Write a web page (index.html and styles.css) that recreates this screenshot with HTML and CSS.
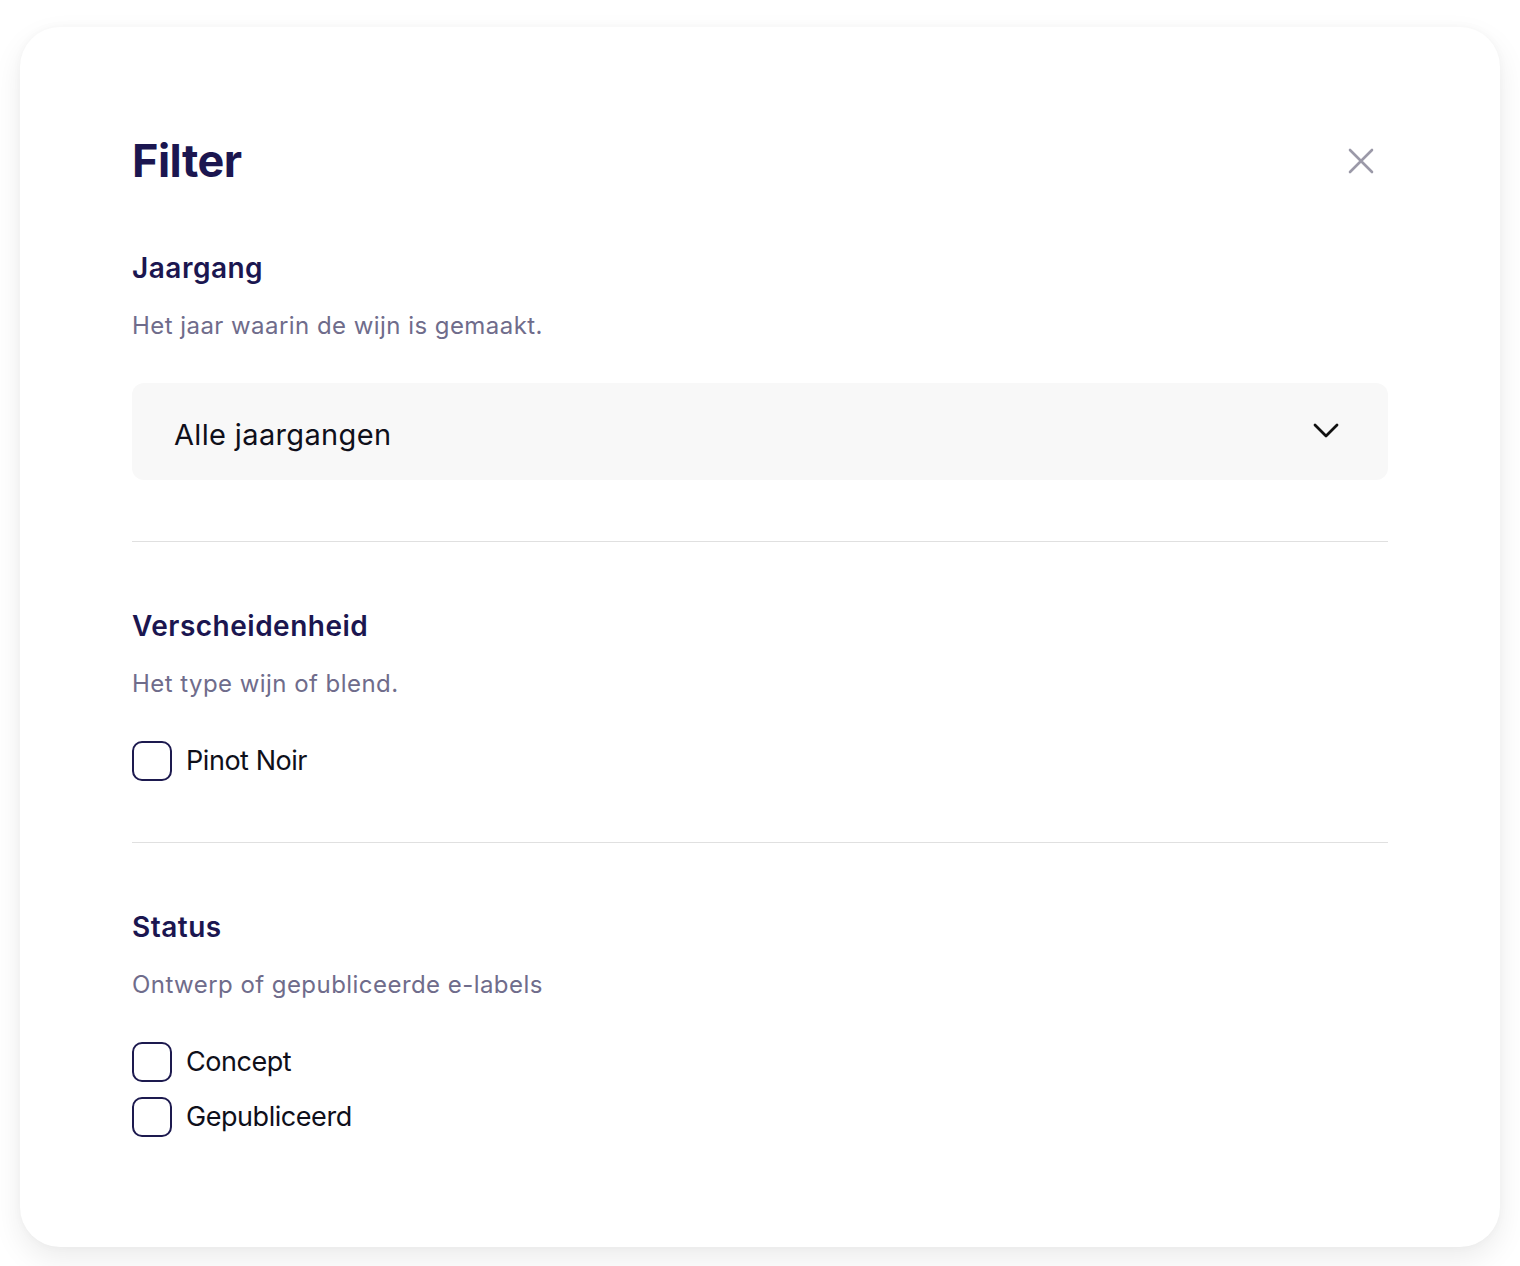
FILE: index.html
```html
<!DOCTYPE html>
<html lang="nl">
<head>
  <meta charset="UTF-8" />
  <meta name="viewport" content="width=device-width, initial-scale=1.0" />
  <title>Filter</title>
  <link rel="stylesheet" href="styles.css">
</head>
<body>
  <div class="card">
    <div class="card-header">
      <h1>Filter</h1>
      <button class="close-btn" aria-label="Sluiten">
        <svg width="28" height="28" viewBox="0 0 28 28" fill="none">
          <path d="M3 3L25 25M25 3L3 25" stroke="#9b99a8" stroke-width="2.6" stroke-linecap="round" />
        </svg>
      </button>
    </div>

    <div class="section">
      <h2>Jaargang</h2>
      <p class="hint">Het jaar waarin de wijn is gemaakt.</p>
      <div class="select">
        <span>Alle jaargangen</span>
        <svg width="26" height="16" viewBox="0 0 26 16" fill="none">
          <path d="M2 2L13 13L24 2" stroke="#111" stroke-width="2.8" stroke-linecap="round" stroke-linejoin="round" />
        </svg>
      </div>
    </div>

    <div class="section">
      <h2>Verscheidenheid</h2>
      <p class="hint">Het type wijn of blend.</p>
      <div class="checkbox-list">
        <label class="check"><span class="box"></span> Pinot Noir</label>
      </div>
    </div>

    <div class="section last">
      <h2>Status</h2>
      <p class="hint">Ontwerp of gepubliceerde e-labels</p>
      <div class="checkbox-list">
        <label class="check"><span class="box"></span> Concept</label>
        <label class="check"><span class="box"></span> Gepubliceerd</label>
      </div>
    </div>
  </div>
</body>
</html>
```

FILE: styles.css
```css
body {
  margin: 0;
  padding: 27px 20px 19px;
  background: #fff;
  font-family: Inter, "Noto Sans", sans-serif;
}
.card {
  background: #fff;
  border-radius: 40px;
  box-shadow: 0 12px 30px rgba(0,0,0,0.08), 0 0 10px rgba(0,0,0,0.03);
  padding: 107px 112px 110px;
}
.card-header {
  display: flex;
  align-items: center;
  justify-content: space-between;
}
h1 {
  margin: 0;
  font-size: 45px;
  line-height: 54px;
  font-weight: 700;
  color: #1b1650;
  letter-spacing: -0.5px;
}
.close-btn {
  background: none;
  border: none;
  padding: 0;
  margin-right: 13px;
  width: 28px;
  height: 28px;
  cursor: pointer;
}
.section {
  padding: 62px 0 61px;
  border-bottom: 1px solid #e0e0e0;
}
.section + .section {
  padding-top: 66px;
}
.section.last {
  border-bottom: none;
  padding-bottom: 0;
}
h2 {
  margin: 0;
  font-size: 28px;
  line-height: 36px;
  font-weight: 600;
  color: #1b1650;
  letter-spacing: 0.5px;
}
.hint {
  margin: 24px 0 41px;
  font-size: 24px;
  line-height: 32px;
  color: #6f6c8b;
  letter-spacing: 0.45px;
}
.select {
  display: flex;
  align-items: center;
  justify-content: space-between;
  height: 97px;
  box-sizing: border-box;
  padding: 5px 49px 0 42px;
  background: #f8f8f8;
  border-radius: 12px;
  font-size: 29px;
  color: #0f0f1a;
  letter-spacing: 0.35px;
}
.select svg {
  margin-top: -6px;
}
.checkbox-list {
  display: flex;
  flex-direction: column;
  gap: 15px;
}
.check {
  display: flex;
  align-items: center;
  gap: 14px;
  font-size: 27px;
  line-height: 40px;
  color: #0f0f1a;
  letter-spacing: -0.45px;
}
.box {
  width: 40px;
  height: 40px;
  box-sizing: border-box;
  border: 2.5px solid #1d1a4f;
  border-radius: 10px;
}
```
